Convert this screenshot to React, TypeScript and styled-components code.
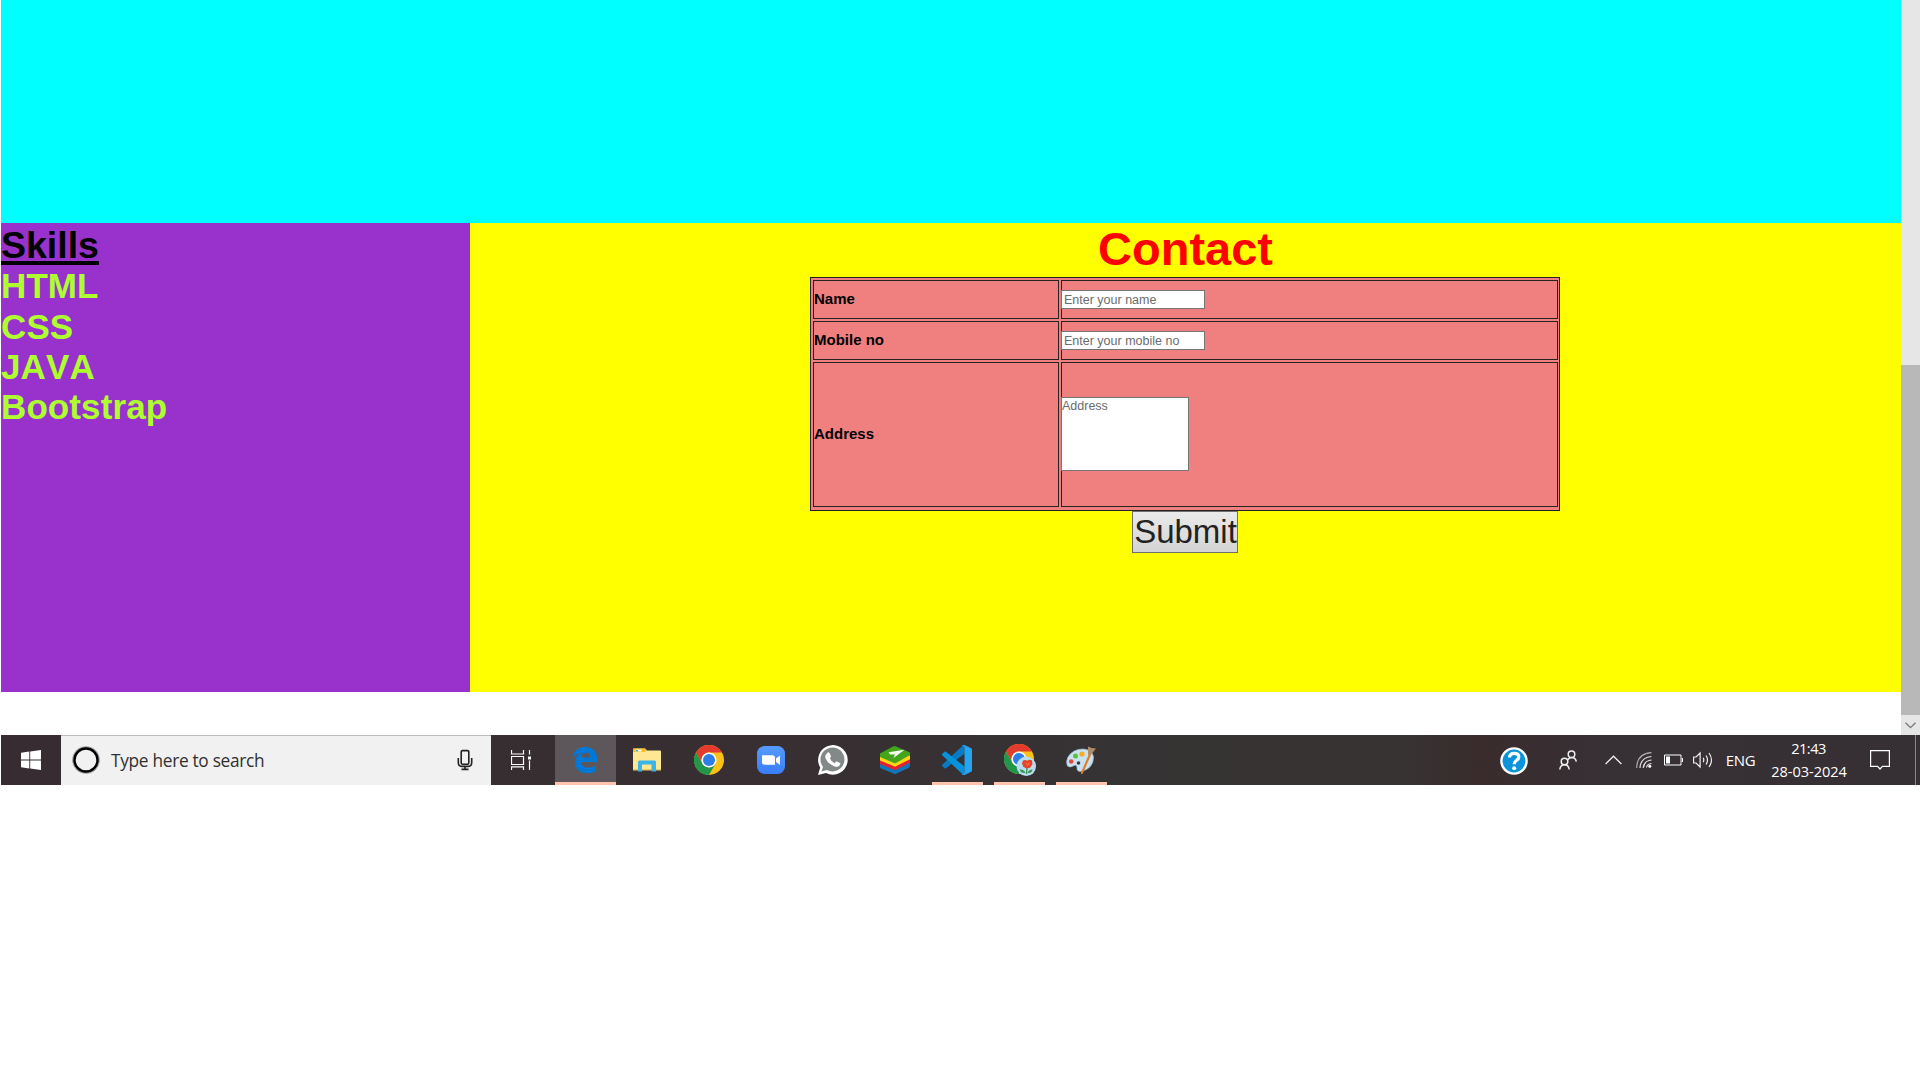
import React from 'react';
import styled, { createGlobalStyle } from 'styled-components';

const GlobalStyle = createGlobalStyle`
  * { box-sizing: border-box; }
  html, body { margin: 0; padding: 0; background: #fff; overflow: hidden; }
  body { font-family: "Liberation Sans", Arial, sans-serif; }
`;

const Screen = styled.div`
  width: 1920px;
  height: 1080px;
  background: #fff;
  display: flex;
  flex-direction: column;
`;

const Viewport = styled.div`
  height: 735px;
  display: flex;
  padding-left: 1px;
`;

const Page = styled.main`
  width: 1900px;
  display: flex;
  flex-direction: column;
`;

const Banner = styled.section`
  height: 223px;
  background: #00ffff;
`;

const Columns = styled.div`
  height: 469px;
  display: flex;
`;

const SkillsPanel = styled.section`
  width: 469px;
  background: #9932cc;
`;

const SkillsTitle = styled.h2`
  margin: 0;
  height: 43.4px;
  font-size: 37.5px;
  line-height: 45px;
  font-weight: bold;
  color: #000;
  text-decoration: underline;
  text-decoration-thickness: 4px;
  text-underline-offset: 3px;
  text-decoration-skip-ink: none;
`;

const Skill = styled.div`
  font-size: 35px;
  line-height: 40.3px;
  letter-spacing: 0.1px;
  font-kerning: none;
  font-weight: bold;
  color: #adff2f;
`;

const ContactPanel = styled.section`
  width: 1431px;
  background: #ffff00;
  display: flex;
  flex-direction: column;
  align-items: center;
`;

const ContactTitle = styled.h1`
  margin: 0;
  height: 54px;
  font-size: 47px;
  line-height: 52px;
  font-weight: bold;
  color: #ff0000;
`;

const FormGrid = styled.div`
  width: 750px;
  height: 234px;
  margin-right: 1px;
  background: #f08080;
  border: 1px solid #262323;
  padding: 2px 1px 3px 2px;
  display: grid;
  grid-template-columns: 246px 497px;
  grid-template-rows: 39px 39px 145px;
  gap: 2px;
`;

const Cell = styled.div`
  border: 1px solid #262323;
  display: flex;
  align-items: center;
  font-size: 15px;
  font-weight: bold;
  color: #000;
`;

const Label = styled.label`
  line-height: 17px;
  margin-top: -3px;
`;

const TextInput = styled.input`
  width: 144px;
  height: 19px;
  margin: 0 0 0 -1px;
  padding: 1px 2px;
  border: 1px solid #767676;
  border-radius: 0;
  background: #fff;
  font: 12.5px "Liberation Sans", Arial, sans-serif;
  outline: none;
  &::placeholder { color: #6c6c6c; }
`;

const AddressInput = styled.textarea`
  width: 128px;
  height: 74px;
  margin: -2px 0 0 -1px;
  padding: 1px 0;
  border: 1px solid #767676;
  border-radius: 0;
  background: #fff;
  font: 12.5px/14px "Liberation Sans", Arial, sans-serif;
  resize: none;
  overflow: hidden;
  outline: none;
  &::placeholder { color: #6c6c6c; }
`;

const Submit = styled.button`
  width: 106px;
  height: 42px;
  margin: 0 1px 0 0;
  padding: 0 0 0 1px;
  border: 1px solid #707070;
  border-radius: 0;
  background: linear-gradient(#eaeaea, #d4d4d4);
  color: #222;
  font: 33px/38px "Liberation Sans", Arial, sans-serif;
`;

const Scrollbar = styled.div`
  width: 19px;
  background: #e6e6e6;
  display: flex;
  flex-direction: column;
  justify-content: flex-end;
`;

const Thumb = styled.div`
  height: 350px;
  background: #b8b8b8;
`;

const ScrollButton = styled.div`
  height: 20px;
  display: flex;
  align-items: center;
  justify-content: center;
`;

const Taskbar = styled.footer`
  height: 50px;
  margin-left: 1px;
  display: flex;
  color: #fff;
  font-family: "Open Sans", "Noto Sans", sans-serif;
  background: linear-gradient(90deg, #362c31 0, #372f32 800px, #363334 1110px, #373333 1400px, #3a2c2d 1480px, #373035 1600px, #362f33 100%);
`;

const Slot = styled.div<{ $w: number }>`
  width: ${(p) => p.$w}px;
  height: 50px;
  display: flex;
  flex-shrink: 0;
  align-items: center;
  justify-content: center;
  svg { display: block; flex-shrink: 0; }
`;

const SearchBox = styled.div`
  width: 430px;
  height: 50px;
  border-top: 1px solid #bcbcbc;
  background: #f1f1f1;
  display: flex;
  align-items: center;
  padding: 0 18px 1px 11px;
  svg { display: block; }
`;

const SearchText = styled.span`
  flex: 1;
  margin-left: 11px;
  font-size: 17.3px;
  line-height: 24px;
  letter-spacing: -0.3px;
  color: #303030;
  padding-top: 1px;
`;

const TaskButton = styled.div<{ $w: number; $active?: boolean; $bar?: number }>`
  width: ${(p) => p.$w}px;
  height: 50px;
  flex-shrink: 0;
  display: flex;
  flex-direction: column;
  align-items: center;
  background: ${(p) => (p.$active ? '#5d575b' : 'transparent')};
  &::after {
    content: '';
    width: ${(p) => p.$bar ?? 0}px;
    height: 3px;
    background: #ffc3ae;
  }
`;

const AppIcon = styled.div`
  height: 47px;
  padding-top: 3px;
  display: flex;
  align-items: center;
  svg { display: block; }
`;

const Spacer = styled.div`
  flex: 1;
`;

const Language = styled.span`
  font-size: 15px;
  line-height: 20px;
  letter-spacing: -0.4px;
  padding-right: 1px;
`;

const Clock = styled.div`
  display: flex;
  flex-direction: column;
  align-items: center;
  font-size: 14.6px;
  line-height: 23px;
  white-space: nowrap;
`;

const Time = styled.span`
  letter-spacing: -0.5px;
  padding-right: 1px;
`;

const DateText = styled.span`
  letter-spacing: -0.05px;
`;

const ShowDesktop = styled.div`
  width: 5px;
  border-left: 1px solid #8a8587;
`;

const WindowsLogo = () => (
  <svg width="20" height="20" viewBox="0 0 20 20" fill="#fff">
    <path d="M0 2.8 8.3 1.6V9.4H0zM9.2 1.4 20 0v9.4H9.2zM0 10.4h8.3v8L0 17.3zM9.2 10.4H20V20L9.2 18.5z" />
  </svg>
);

const Cortana = () => (
  <svg width="28" height="28" viewBox="0 0 28 28" fill="none">
    <circle cx="14" cy="14" r="12.9" stroke="#999" strokeWidth="1.8" />
    <circle cx="14" cy="14" r="11.5" stroke="#000" strokeWidth="2.4" />
  </svg>
);

const Mic = () => (
  <svg width="16" height="22" viewBox="0 0 16 22" fill="none" stroke="#222" strokeWidth="1.6">
    <rect x="4.2" y="1.6" width="7.6" height="13.6" rx="1.2" />
    <path d="M1.3 9v4.400q0 4 4 4h5.400q4 0 4-4V9M8 17.400v3M4.500 20.400h7" />
  </svg>
);

const TaskView = () => (
  <svg width="24" height="20" viewBox="1 0 24 20" fill="none" stroke="#fff" strokeWidth="1.200">
    <path d="M1.500 0v4h12V0M1.500 6.500h12v8h-12zM1.500 20v-3.200h12V20M19.500 0v4.500M19.500 10.500V20" />
    <rect x="18" y="6.500" width="3" height="3" fill="#fff" stroke="none" />
  </svg>
);

const Edge = () => (
  <svg width="28" height="28" viewBox="0 0 28 28">
    <path fill="#0078d7" d="M.6 12.200C1.700 4.800 6.500 1 13.500 1 21 1 25.200 6.300 25.200 12.800v3.100H9.100c.2 3.900 3.700 5.700 7.700 5.700 2.600 0 4.700-.7 6.700-1.900v5.700c-2.400 1.200-5 1.800-8.300 1.800-7.500 0-12.100-4.400-12.100-10.900 0-4.300 2.400-7.800 6.200-9.600C5.300 7.300 2.300 9.300.6 12.200zM9.300 11.400h9.100c0-3-1.500-4.700-4.300-4.700-2.600 0-4.400 1.900-4.800 4.700z" />
  </svg>
);

const Explorer = () => (
  <svg width="28" height="24" viewBox="0 0 28 24">
    <path d="M0 22V1.200Q0 .5.7.500H12l2 2h13q1 0 1 1V22z" fill="#ffe793" />
    <path d="M0 4V1.200Q0 .5.7.500H12l1.500 2L12 4z" fill="#f4bd25" />
    <path d="M2.500 1.500h6v2h-6z" fill="#fff" /><path d="M3 2h2v1.500H3z" fill="#33b5ea" />
    <path d="M0 21h28v1.500H0z" fill="#e9c763" />
    <path d="M5 23.500V14q0-1.500 1.500-1.500h15Q23 12.500 23 14v9.500h-4.500v-7H9v7z" fill="#3bb4e8" />
  </svg>
);

const ChromeMark = () => (
  <>
    <circle cx="15" cy="15" r="15" fill="#fbc116" />
    <path d="M2 7.500A15 15 0 0 1 28 7.500H15a7.500 7.500 0 0 0-6.500 11.200z" fill="#e33b2e" />
    <path d="M2 7.500 8.500 18.700 13 22l8.500-3.200L15 30A15 15 0 0 1 2 7.500z" fill="#22964a" />
    <circle cx="15" cy="15" r="7.600" fill="#fff" />
    <circle cx="15" cy="15" r="6" fill="#2f7de9" />
  </>
);

const Chrome = () => (
  <svg width="30" height="30" viewBox="0 0 30 30"><ChromeMark /></svg>
);

const ChromeProfile = () => (
  <svg width="32" height="32" viewBox="0 0 32 32">
    <ChromeMark />
    <circle cx="22.300" cy="22.300" r="9.700" fill="#b9dcf0" />
    <path d="M23 23.500 22.500 30" stroke="#389455" strokeWidth="1.300" fill="none" />
    <path d="M15.500 25.500q4.500-.5 6 3.500-4.500.5-6-3.500zM23.500 29q1-3.500 5-3.500-.5 4-5 3.500z" fill="#389455" />
    <path d="M19 16.500q2.500-1 4.300.2 2.200-1.700 4.700-.5l.5 4-2.500 3.600-3 .8-3.500-1.600-1.500-3.500z" fill="#e6432b" />
    <path d="M21.500 18.500q1.500 1 2 3 1-2.500 2.500-2.500" fill="none" stroke="#f98057" strokeWidth="1" />
  </svg>
);

const ZoomLogo = () => (
  <svg width="28" height="28" viewBox="0 0 28 28">
    <defs><linearGradient id="zoomFill" x1="0" y1="0" x2="0" y2="1"><stop stopColor="#559bff" /><stop offset="1" stopColor="#3a7df8" /></linearGradient></defs>
    <rect width="28" height="28" rx="7.500" fill="url(#zoomFill)" />
    <path fill="#fff" d="M5 9.200h10.500q2.500 0 2.500 2.500v7.100H8q-3 0-3-2.500zM19 12.500l4-3v9.500l-4-3z" />
  </svg>
);

const WhatsApp = () => (
  <svg width="30" height="30" viewBox="0 0 30 30">
    <path d="M0 30l2.200-7.500A14.800 14.800 0 1 1 8 28z" fill="#fff" />
    <path d="M3.500 26.500 5 21.800A12 12 0 1 1 8.800 25z" fill="#838989" />
    <path fill="#fff" d="M9.500 7.800q1-1 2 .3l1.400 3q.3.8-1 2.400 1.300 3 4.800 4.700 1.500-2.200 2.300-1.800l3 1.500q.8.600-.3 2.300-1.900 2.400-5.600 1-6-2.200-8.500-7.700-1.200-3.500 1.900-5.700z" />
  </svg>
);

const BlueStacks = () => (
  <svg width="30" height="28" viewBox="0 0 30 28">
    <path d="M0 16.500 15 10l15 5.500v4Q30 21 28.500 22L16 27.700q-1 .5-2 0L1 22.500q-1-.5-1-1.500z" fill="#1375b8" />
    <path d="M0 13.500 15 7l15 5.500v4L16 23.700q-1 .5-2 0L0 18z" fill="#e6202d" />
    <path d="M0 10.500 15 4l15 5.500v3.700L16 20.200q-1 .5-2 0L0 14.500z" fill="#ffd514" />
    <path d="M0 7.500 13 .5q1.500-.8 3 0L30 6.500V9L16 17q-1 .5-2 0L0 11z" fill="#42a51c" />
    <path d="M24.500 3.700 13.500 12l1.500-3.600-5 .2L8.500 6.300z" fill="#fff" opacity=".95" />
  </svg>
);

const VSCode = () => (
  <svg width="32" height="30" viewBox="0 0 32 30">
    <path d="M22.500 0V8.500L4 23.200q-.8.500-1.500 0L.4 21.200q-.8-.8 0-1.600L20.300 1.100z" fill="#087bc4" />
    <path d="M22.500 30V21.500L4 6.800q-.8-.5-1.500 0L.4 8.800q-.8.800 0 1.600L20.300 28.900z" fill="#0792dc" />
    <path d="M22.500.1 28.800 3q1.200.5 1.200 1.700v20.600q0 1.200-1.200 1.700L22.500 29.900q-1.700.6-3.200-1 3.200 1 3.200-2V3.100q0-3-3.200-2 1.500-1.600 3.200-1z" fill="#25a4f0" />
  </svg>
);

const Paint = () => (
  <svg width="32" height="30" viewBox="0 0 32 30">
    <path d="M2 12Q7 4 17 4q9 .5 10.500 8 0 12-13 14.500-4 0-3.500-4.500-.5-3-4-1-3 2-5.500 0Q-.5 17 2 12z" fill="#c9e1f0" stroke="#9bbdd2" strokeWidth=".7" />
    <circle cx="12.500" cy="18" r="1.800" fill="#3a3536" />
    <circle cx="5.200" cy="16.500" r="2.300" fill="#e5483b" />
    <circle cx="9.500" cy="11" r="2.500" fill="#5ebf3b" />
    <circle cx="16" cy="9" r="2.600" fill="#f7ad1e" />
    <path d="m23 9 2 1-8.200 18.500q-2 1.800-1.800-1z" fill="#e27b25" />
    <path d="M22 1.500 25.500 3 30 3.500 26 8.500 24 11l-2-1z" fill="#b18a66" />
  </svg>
);

const Help = () => (
  <svg width="28" height="30" viewBox="0 -2 28 30" fill="none">
    <circle cx="14" cy="14" r="12.600" fill="#0b93dc" stroke="#fff" strokeWidth="2.400" />
    <path d="M9.500 10.500q.2-4.200 4.700-4.200 4.600 0 4.600 3.700 0 2-2.400 3.500-2.200 1.400-2.200 3.800" stroke="#fff" strokeWidth="3.200" />
    <circle cx="14.200" cy="21.200" r="2" fill="#fff" />
  </svg>
);

const People = () => (
  <svg width="18" height="20" viewBox="0 0 18 20" fill="none" stroke="#eee" strokeWidth="1.500">
    <circle cx="12.500" cy="4.300" r="3.300" /><path d="M8.800 9.800Q10.500 7.600 12.500 7.600q4 0 4.800 4" />
    <circle cx="5.500" cy="11.500" r="3.300" /><path d="M.8 19.500q.7-4.700 4.700-4.700t4.700 4.700" />
  </svg>
);

const ChevronUp = () => (
  <svg width="17" height="10" viewBox="0 0 17 10" fill="none" stroke="#eee" strokeWidth="1.300"><path d="m.6 9 7.900-7.800L16.400 9" /></svg>
);

const Wifi = () => (
  <svg width="16" height="16" viewBox="0 0 16 16" fill="none" strokeWidth="1.200">
    <path d="M.7 16Q1 1.500 15.500.700" stroke="#aaa" />
    <path d="M4 16Q4.500 5.500 15.500 4.500M7.200 16Q8 8.800 15.500 8" stroke="#ddd" />
    <path d="M10.500 15.500q.5-3.500 5-4" stroke="#ddd" />
    <circle cx="13.800" cy="14.300" r="1.500" fill="#fff" />
  </svg>
);

const Battery = () => (
  <svg width="19" height="12" viewBox="0 0 19 12" fill="none" stroke="#fff"><path d="M.5 1h16.500v10H.5z" /><path d="M18.500 4v4" /><path d="M2 2.500h4v7H2z" fill="#fff" stroke="none" /></svg>
);

const Speaker = () => (
  <svg width="21" height="18" viewBox="0 0 21 18" fill="none" stroke="#eee" strokeWidth="1.200">
    <path d="M.6 6h2.500l4-4v14l-4-4H.6zM10.200 6.800q1.200 2.200 0 4.400M13 4.500q3 4.500 0 9M16 2q5 7 0 14" />
  </svg>
);

const ActionCenter = () => (
  <svg width="25" height="20" viewBox="0 0 25 20" fill="none" stroke="#fff" strokeWidth="1.200"><path d="M.6.600h18.800v15.800h-7L10 19l-2.400-2.600h-7z" /></svg>
);

const skills = ['HTML', 'CSS', 'JAVA', 'Bootstrap'];

const apps = [
  { id: 'edge', icon: <Edge />, w: 61, active: true, bar: 61 },
  { id: 'explorer', icon: <Explorer />, w: 62 },
  { id: 'chrome', icon: <Chrome />, w: 62 },
  { id: 'zoom', icon: <ZoomLogo />, w: 62 },
  { id: 'whatsapp', icon: <WhatsApp />, w: 62 },
  { id: 'bluestacks', icon: <BlueStacks />, w: 62 },
  { id: 'vscode', icon: <VSCode />, w: 63, bar: 51 },
  { id: 'chrome-profile', icon: <ChromeProfile />, w: 61, bar: 51 },
  { id: 'paint', icon: <Paint />, w: 63, bar: 51 },
];

export default function App() {
  return (
    <>
      <GlobalStyle />
      <Screen>
        <Viewport>
          <Page>
            <Banner />
            <Columns>
              <SkillsPanel>
                <SkillsTitle>Skills</SkillsTitle>
                {skills.map((s) => <Skill key={s}>{s}</Skill>)}
              </SkillsPanel>
              <ContactPanel>
                <ContactTitle>Contact</ContactTitle>
                <FormGrid>
                  <Cell><Label htmlFor="name">Name</Label></Cell>
                  <Cell><TextInput id="name" placeholder="Enter your name" /></Cell>
                  <Cell><Label htmlFor="mobile">Mobile no</Label></Cell>
                  <Cell><TextInput id="mobile" placeholder="Enter your mobile no" /></Cell>
                  <Cell><Label htmlFor="address">Address</Label></Cell>
                  <Cell><AddressInput id="address" placeholder="Address" /></Cell>
                </FormGrid>
                <Submit>Submit</Submit>
              </ContactPanel>
            </Columns>
          </Page>
          <Scrollbar>
            <Thumb />
            <ScrollButton>
              <svg width="11" height="7" viewBox="0 0 11 7" fill="none" stroke="#777" strokeWidth="1.300"><path d="m.5.700 5 5 5-5" /></svg>
            </ScrollButton>
          </Scrollbar>
        </Viewport>
        <Taskbar>
          <Slot $w={60}><WindowsLogo /></Slot>
          <SearchBox>
            <Cortana />
            <SearchText>Type here to search</SearchText>
            <Mic />
          </SearchBox>
          <Slot $w={64}><TaskView /></Slot>
          {apps.map((a) => (
            <TaskButton key={a.id} $w={a.w} $active={a.active} $bar={a.bar}>
              <AppIcon>{a.icon}</AppIcon>
            </TaskButton>
          ))}
          <Spacer />
          <Slot $w={60}><Help /></Slot>
          <Slot $w={48}><People /></Slot>
          <Slot $w={42}><ChevronUp /></Slot>
          <Slot $w={20}><Wifi /></Slot>
          <Slot $w={39}><Battery /></Slot>
          <Slot $w={20}><Speaker /></Slot>
          <Slot $w={56}><Language>ENG</Language></Slot>
          <Slot $w={80}>
            <Clock><Time>21:43</Time><DateText>28-03-2024</DateText></Clock>
          </Slot>
          <Slot $w={66}><ActionCenter /></Slot>
          <ShowDesktop />
        </Taskbar>
      </Screen>
    </>
  );
}
